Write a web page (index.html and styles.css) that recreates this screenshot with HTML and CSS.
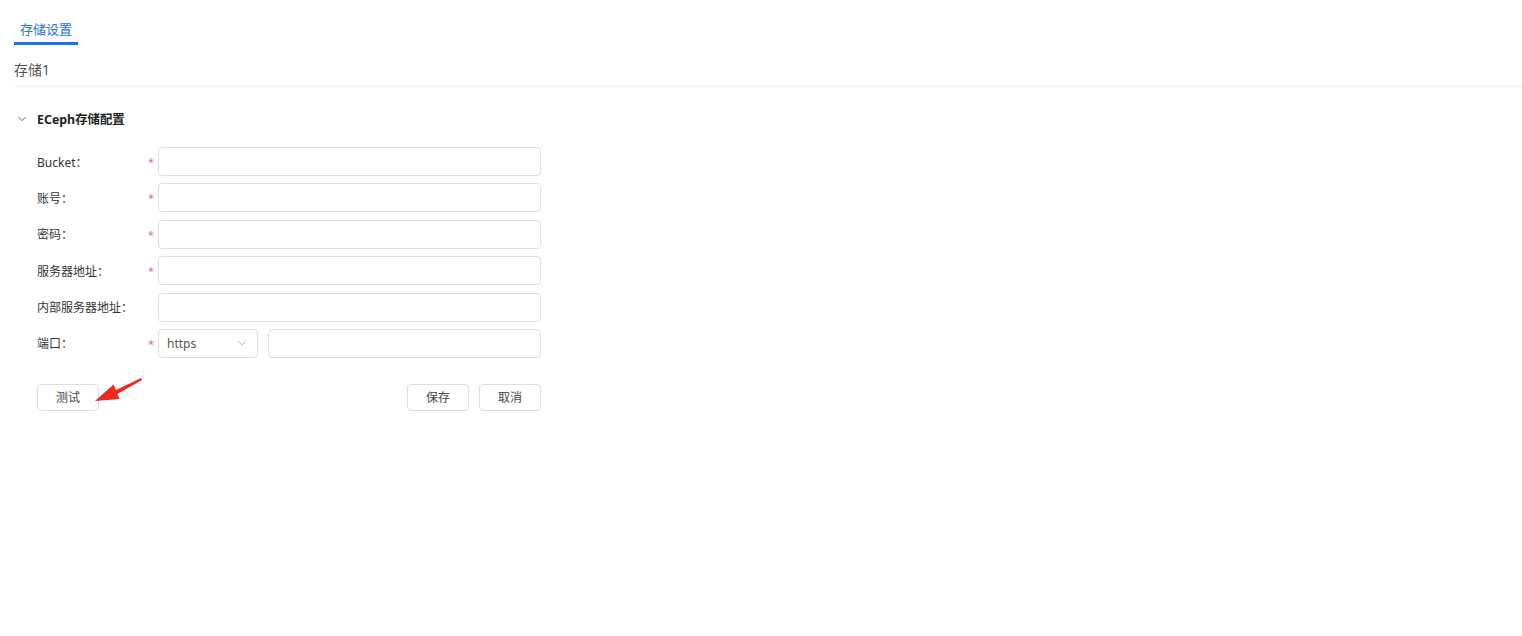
FILE: index.html
```html
<!DOCTYPE html>
<html lang="zh-CN">
<head>
    <meta charset="UTF-8">
    <title>存储设置</title>
    <link rel="stylesheet" href="styles.css">
</head>
<body>
    <div class="tabs">
        <div class="tab active">存储设置</div>
    </div>

    <div class="store-title">存储1</div>

    <div class="section">
        <div class="section-head">
            <svg class="chevron" width="10" height="10" viewBox="0 0 10 10">
                <path d="M1.5 3.2 L5 6.7 L8.5 3.2" fill="none" stroke="#666" stroke-width="1"/>
            </svg>
            <span>ECeph存储配置</span>
        </div>

        <form class="form">
            <div class="row">
                <label class="label">Bucket：</label>
                <span class="star">*</span>
                <input class="input" type="text">
            </div>
            <div class="row">
                <label class="label">账号：</label>
                <span class="star">*</span>
                <input class="input" type="text">
            </div>
            <div class="row">
                <label class="label">密码：</label>
                <span class="star">*</span>
                <input class="input" type="password">
            </div>
            <div class="row">
                <label class="label">服务器地址：</label>
                <span class="star">*</span>
                <input class="input" type="text">
            </div>
            <div class="row">
                <label class="label">内部服务器地址：</label>
                <span class="star"></span>
                <input class="input" type="text">
            </div>
            <div class="row">
                <label class="label">端口：</label>
                <span class="star">*</span>
                <div class="port">
                    <div class="select">
                        <span>https</span>
                        <svg width="10" height="10" viewBox="0 0 10 10">
                            <path d="M1 3.2 L5 6.8 L9 3.2" fill="none" stroke="#bbb" stroke-width="1"/>
                        </svg>
                    </div>
                    <input class="input port-input" type="text">
                </div>
            </div>

            <div class="actions">
                <div class="test-wrap">
                    <button type="button" class="btn">测试</button>
                    <!-- annotation arrow pointing at the test button -->
                    <svg class="arrow" width="60" height="34" viewBox="0 0 60 34">
                        <path d="M50 1 L25 13 L22.5 7.5 L4 24 L28.5 22 L26.5 17 L51 3 Z" fill="#f02a1f"/>
                    </svg>
                </div>
                <div class="right-btns">
                    <button type="button" class="btn">保存</button>
                    <button type="button" class="btn">取消</button>
                </div>
            </div>
        </form>
    </div>
</body>
</html>
```

FILE: styles.css
```css
body {
    margin: 0;
    padding: 0 0 0 14px;
    font-family: "Noto Sans", "Noto Sans CJK SC", sans-serif;
    color: #333;
    background: #fff;
}

.tabs {
    display: flex;
    padding-top: 20px;
}

.tab {
    font-size: 13px;
    line-height: 19px;
    padding: 0 6px 3px;
    color: #2a6fe0;
    border-bottom: 3px solid #1a73e8;
}

.store-title {
    font-size: 14px;
    line-height: 20px;
    color: #555;
    padding: 15px 0 6px;
    border-bottom: 1px solid #eeeeee;
}

.section {
    padding: 23px 0 0 3px;
}

.section-head {
    display: flex;
    align-items: center;
    font-size: 12.4px;
    font-weight: bold;
    color: #222;
    height: 18px;
}

.chevron {
    margin-right: 10px;
}

.form {
    padding: 19px 0 0 20px;
}

.row {
    display: flex;
    align-items: center;
    height: 29px;
    margin-bottom: 7.4px;
}

.label {
    width: 111px;
    font-size: 12px;
    color: #333;
}

.star {
    width: 10px;
    color: #f56c6c;
    font-size: 11px;
    line-height: 11px;
}

.input {
    box-sizing: border-box;
    width: 383px;
    height: 29px;
    border: 1px solid #dcdfe6;
    border-radius: 4px;
    padding: 0 8px;
    outline: none;
    font-family: inherit;
}

.port {
    display: flex;
    gap: 10px;
}

.select {
    box-sizing: border-box;
    width: 100px;
    height: 29px;
    border: 1px solid #dcdfe6;
    border-radius: 4px;
    display: flex;
    align-items: center;
    justify-content: space-between;
    padding: 0 10px 0 8px;
    font-size: 12px;
    color: #555;
}

.port-input {
    width: 273px;
}

.actions {
    display: flex;
    justify-content: space-between;
    width: 504px;
    margin-top: 25.6px;
}

.test-wrap {
    position: relative;
}

.arrow {
    position: absolute;
    left: 54px;
    top: -7px;
}

.right-btns {
    display: flex;
    gap: 10px;
}

.btn {
    box-sizing: border-box;
    width: 62px;
    height: 27px;
    background: #fff;
    border: 1px solid #dcdfe6;
    border-radius: 4px;
    font-family: inherit;
    font-size: 12px;
    color: #444;
    cursor: pointer;
}
```
